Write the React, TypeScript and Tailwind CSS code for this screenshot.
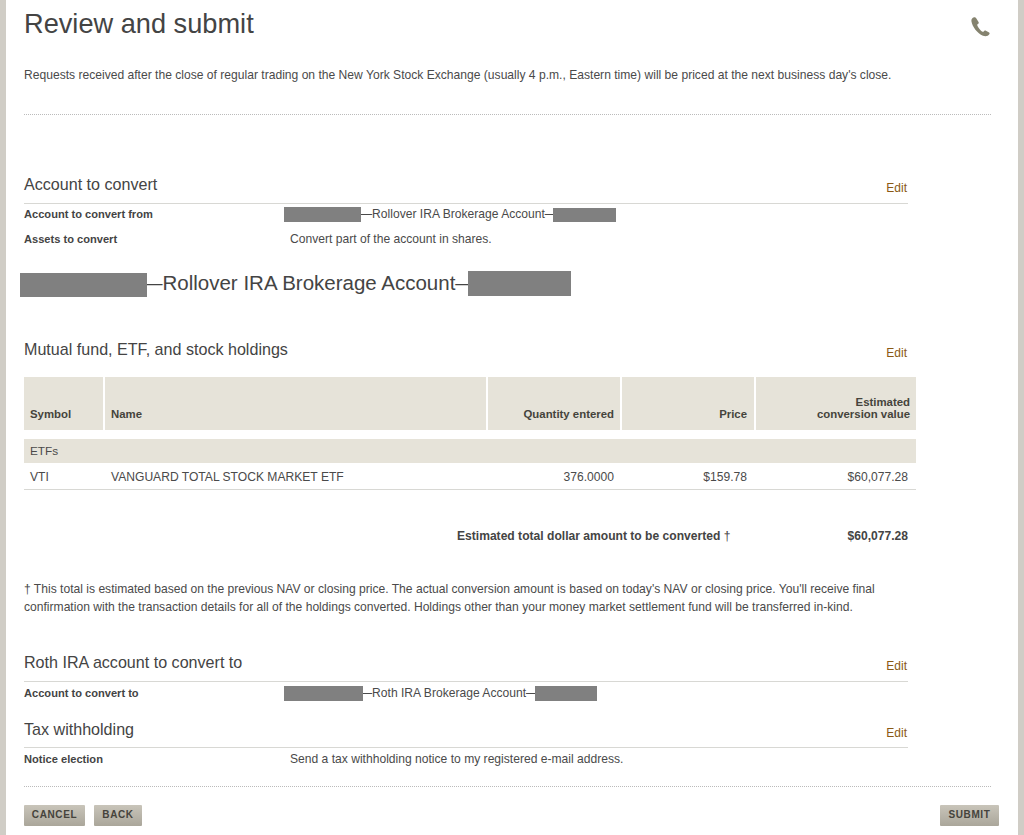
const Redact = ({ className }: { className: string }) => (
  <span className={`relative inline-block bg-[#808080] align-middle ${className}`} />
);

const SectionHead = ({ title, className }: { title: string; className: string }) => (
  <div className={`flex w-[884px] items-end justify-between border-b border-[#d8d8d4] ${className}`}>
    <h2 className="text-[16.1px] leading-[20px] font-normal text-[#444]">{title}</h2>
    <a className="mr-px mb-[-1px] text-[12px] leading-[14px] text-[#8a5a14]">Edit</a>
  </div>
);

const Button = ({ label, className }: { label: string; className: string }) => (
  <button
    className={`h-[21px] rounded-[1px] bg-gradient-to-b from-[#c9c5ba] to-[#aaa69a] pb-[3px] text-center text-[10px] font-bold tracking-[0.6px] text-[#45433c] ${className}`}
  >
    {label}
  </button>
);

const PhoneIcon = () => (
  <svg viewBox="0 0 20 20" className="h-[22px] w-[22px] fill-[#85836f]">
    <path d="M4.6 1.2 C3 1.8 1.9 3 2.2 4.8 C2.9 9.6 7.6 16 12.7 18 C14.8 18.8 17.4 18.6 18.6 16.4 C18.9 15.8 18.8 15.3 18.3 15 L15.4 13.3 C14.9 13 14.4 13.1 14 13.5 L12.8 14.6 C10.6 13.6 8.2 10.4 7.3 7.9 L8.5 7 C8.9 6.6 9 6.1 8.8 5.6 L6.4 1.8 C5.9 1.1 5.3 0.9 4.6 1.2 Z" />
  </svg>
);

export default function App() {
  return (
    <div className="h-[835px] overflow-hidden bg-[#d0cdc6] px-[6px] font-['Liberation_Sans',Arial,sans-serif] text-[#4a4a4a]">
      <div className="h-full bg-white pl-[18px] pr-[27px]">
        <div className="flex items-start justify-between">
          <h1 className="mt-[9px] text-[27.2px] leading-[30px] font-normal text-[#444]">Review and submit</h1>
          <div className="mt-[16px]">
            <PhoneIcon />
          </div>
        </div>

        <p className="mt-[29px] text-[12.1px] leading-[14px]">
          Requests received after the close of regular trading on the New York Stock Exchange (usually 4 p.m., Eastern
          time) will be priced at the next business day's close.
        </p>

        <div className="mt-[32px] border-t border-dotted border-[#bbb]" />

        <SectionHead title="Account to convert" className="mt-[60px] h-[29px] pb-[9px]" />

        <div className="mt-[1px] flex h-[19px] items-center text-[11.1px]">
          <span className="w-[260px] font-bold text-[#444]">Account to convert from</span>
          <Redact className="mr-[-1px] h-[15px] w-[77px]" />
          <span className="text-[12.1px]">—Rollover IRA Brokerage Account—</span>
          <Redact className="ml-[-4px] h-[14px] w-[63px]" />
        </div>
        <div className="mt-[6px] flex h-[18px] items-center text-[11.1px]">
          <span className="w-[266px] font-bold text-[#444]">Assets to convert</span>
          <span className="text-[12.1px]">Convert part of the account in shares.</span>
        </div>

        <div className="mt-[22px] -ml-[4px] flex h-[26px] items-center text-[20.5px] text-[#444]">
          <Redact className="mr-[-5px] mt-[3px] h-[24px] w-[127px]" />
          <span>—Rollover IRA Brokerage Account—</span>
          <Redact className="ml-[-8px] h-[25px] w-[103px]" />
        </div>

        <SectionHead title="Mutual fund, ETF, and stock holdings" className="mt-[43px] border-b-0" />

        <div className="mt-[18px] grid w-[892px] grid-cols-[79px_381px_132px_132px_160px] gap-x-[2px] text-[11.4px] font-bold text-[#45433c]">
          <div className="flex h-[53px] items-end bg-[#e6e3d9] pb-[7px] pl-[6px]">Symbol</div>
          <div className="flex h-[53px] items-end bg-[#e6e3d9] pb-[7px] pl-[6px]">Name</div>
          <div className="flex h-[53px] items-end justify-end bg-[#e6e3d9] pb-[7px] pr-[6px]">Quantity entered</div>
          <div className="flex h-[53px] items-end justify-end bg-[#e6e3d9] pb-[7px] pr-[7px]">Price</div>
          <div className="flex h-[53px] items-end justify-end bg-[#e6e3d9] pb-[10px] pr-[6px] text-right leading-[12px]">
            Estimated
            <br />
            conversion value
          </div>
        </div>

        <div className="mt-[9px] flex h-[24px] w-[892px] items-center bg-[#e6e3d9] pl-[6px] pt-[2px] text-[11.8px]">
          ETFs
        </div>

        <div className="flex h-[27px] w-[892px] items-center border-b border-[#d8d8d4] pt-[2px] text-[12.1px]">
          <span className="w-[87px] pl-[6px]">VTI</span>
          <span className="flex-1">VANGUARD TOTAL STOCK MARKET ETF</span>
          <span className="w-[100px] pr-[8px] text-right">376.0000</span>
          <span className="w-[133px] pr-[8px] text-right">$159.78</span>
          <span className="w-[161px] pr-[8px] text-right">$60,077.28</span>
        </div>

        <div className="mt-[39px] flex h-[14px] w-[884px] items-center justify-end text-[12.1px] font-bold text-[#444]">
          <span>
            Estimated total dollar amount to be converted <span className="font-normal">†</span>
          </span>
          <span className="ml-[117px]">$60,077.28</span>
        </div>

        <p className="mt-[37px] w-[880px] text-[12.1px] leading-[18px]">
          † This total is estimated based on the previous NAV or closing price. The actual conversion amount is based on
          today's NAV or closing price. You'll receive final confirmation with the transaction details for all of the
          holdings converted. Holdings other than your money market settlement fund will be transferred in-kind.
        </p>

        <SectionHead title="Roth IRA account to convert to" className="mt-[37px] h-[29px] pb-[9px]" />

        <div className="mt-[2px] flex h-[19px] items-center text-[11.1px]">
          <span className="w-[260px] font-bold text-[#444]">Account to convert to</span>
          <Redact className="mr-[-3px] h-[15px] w-[79px]" />
          <span className="text-[12.1px]">—Roth IRA Brokerage Account—</span>
          <Redact className="ml-[-3px] h-[15px] w-[62px]" />
        </div>

        <SectionHead title="Tax withholding" className="mt-[16px] h-[29px] pb-[8px]" />

        <div className="mt-[2px] flex h-[19px] items-center text-[11.1px]">
          <span className="w-[266px] font-bold text-[#444]">Notice election</span>
          <span className="text-[12.1px]">Send a tax withholding notice to my registered e-mail address.</span>
        </div>

        <div className="mt-[17px] border-t border-dotted border-[#bbb]" />

        <div className="mt-[18px] flex w-[975px] items-start">
          <Button label="CANCEL" className="w-[61px]" />
          <Button label="BACK" className="ml-[9px] w-[48px]" />
          <Button label="SUBMIT" className="ml-auto w-[59px]" />
        </div>
      </div>
    </div>
  );
}
